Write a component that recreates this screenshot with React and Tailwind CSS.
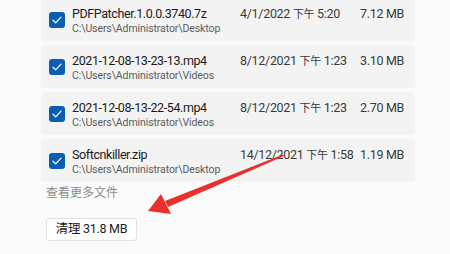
import React from "react";

const files = [
  { name: "PDFPatcher.1.0.0.3740.7z", path: "C:\\Users\\Administrator\\Desktop", day: "4/1/2022", time: "5:20", size: "7.12 MB" },
  { name: "2021-12-08-13-23-13.mp4", path: "C:\\Users\\Administrator\\Videos", day: "8/12/2021", time: "1:23", size: "3.10 MB" },
  { name: "2021-12-08-13-22-54.mp4", path: "C:\\Users\\Administrator\\Videos", day: "8/12/2021", time: "1:23", size: "2.70 MB" },
  { name: "Softcnkiller.zip", path: "C:\\Users\\Administrator\\Desktop", day: "14/12/2021", time: "1:58", size: "1.19 MB" },
];

const Check = () => (
  <div className="w-4 h-4 rounded-[3px] bg-[#0a5fb4] flex items-center justify-center shrink-0">
    <svg width="10" height="8" viewBox="0 0 10 8" fill="none">
      <path d="M1 4.2 L3.7 6.8 L9 1.2" stroke="white" strokeWidth="1.2" strokeLinecap="round" strokeLinejoin="round" />
    </svg>
  </div>
);

const FileRow = ({ file }) => (
  <div className="h-[43px] w-[374px] rounded-[4px] bg-[#f3f3f3] flex">
    <div className="w-[31px] pl-2 flex items-center">
      <Check />
    </div>
    <div className="w-[168px] pt-2">
      <div className="text-[12.5px] leading-4 tracking-[-0.4px] text-[#1b1b1b] whitespace-nowrap">{file.name}</div>
      <div className="text-[10.5px] leading-[14px] tracking-[-0.1px] text-[#5c5c5c] whitespace-nowrap">{file.path}</div>
    </div>
    <div className="w-[120px] pt-2 text-[12.5px] leading-4 tracking-[-0.3px] text-[#3a3a3a] whitespace-nowrap">
      {file.day} <span className="text-[11px]">下午</span> {file.time}
    </div>
    <div className="pt-2 text-[12.5px] leading-4 tracking-[-0.3px] text-[#3a3a3a] whitespace-nowrap">{file.size}</div>
  </div>
);

export default function App() {
  return (
    <div
      className="relative w-[450px] h-[254px] overflow-hidden bg-[#fafafb]"
      style={{ fontFamily: 'Roboto, "Noto Sans CJK SC", sans-serif' }}
    >
      <div className="pl-[41px] -mt-[2px] flex flex-col gap-1">
        {files.map((f) => (
          <FileRow key={f.name} file={f} />
        ))}
      </div>
      <div className="pl-[46px] mt-[3px] text-[12px] leading-4 text-[#8c8c8c]">查看更多文件</div>
      <div className="pl-[46px] mt-[17px]">
        <button className="w-[91px] h-[23px] bg-white border border-[#e2e2e2] rounded-[3px] text-[12.5px] tracking-[-0.3px] text-[#1b1b1b] flex items-center justify-center">
          清理 31.8 MB
        </button>
      </div>
      <svg className="absolute left-0 top-0 pointer-events-none" width="450" height="254" viewBox="0 0 450 254">
        <polygon points="283,154.5 284,156 168,207 165,201" fill="#e8302c" />
        <polygon points="148,211 161,194 171,214" fill="#e8302c" />
      </svg>
    </div>
  );
}
